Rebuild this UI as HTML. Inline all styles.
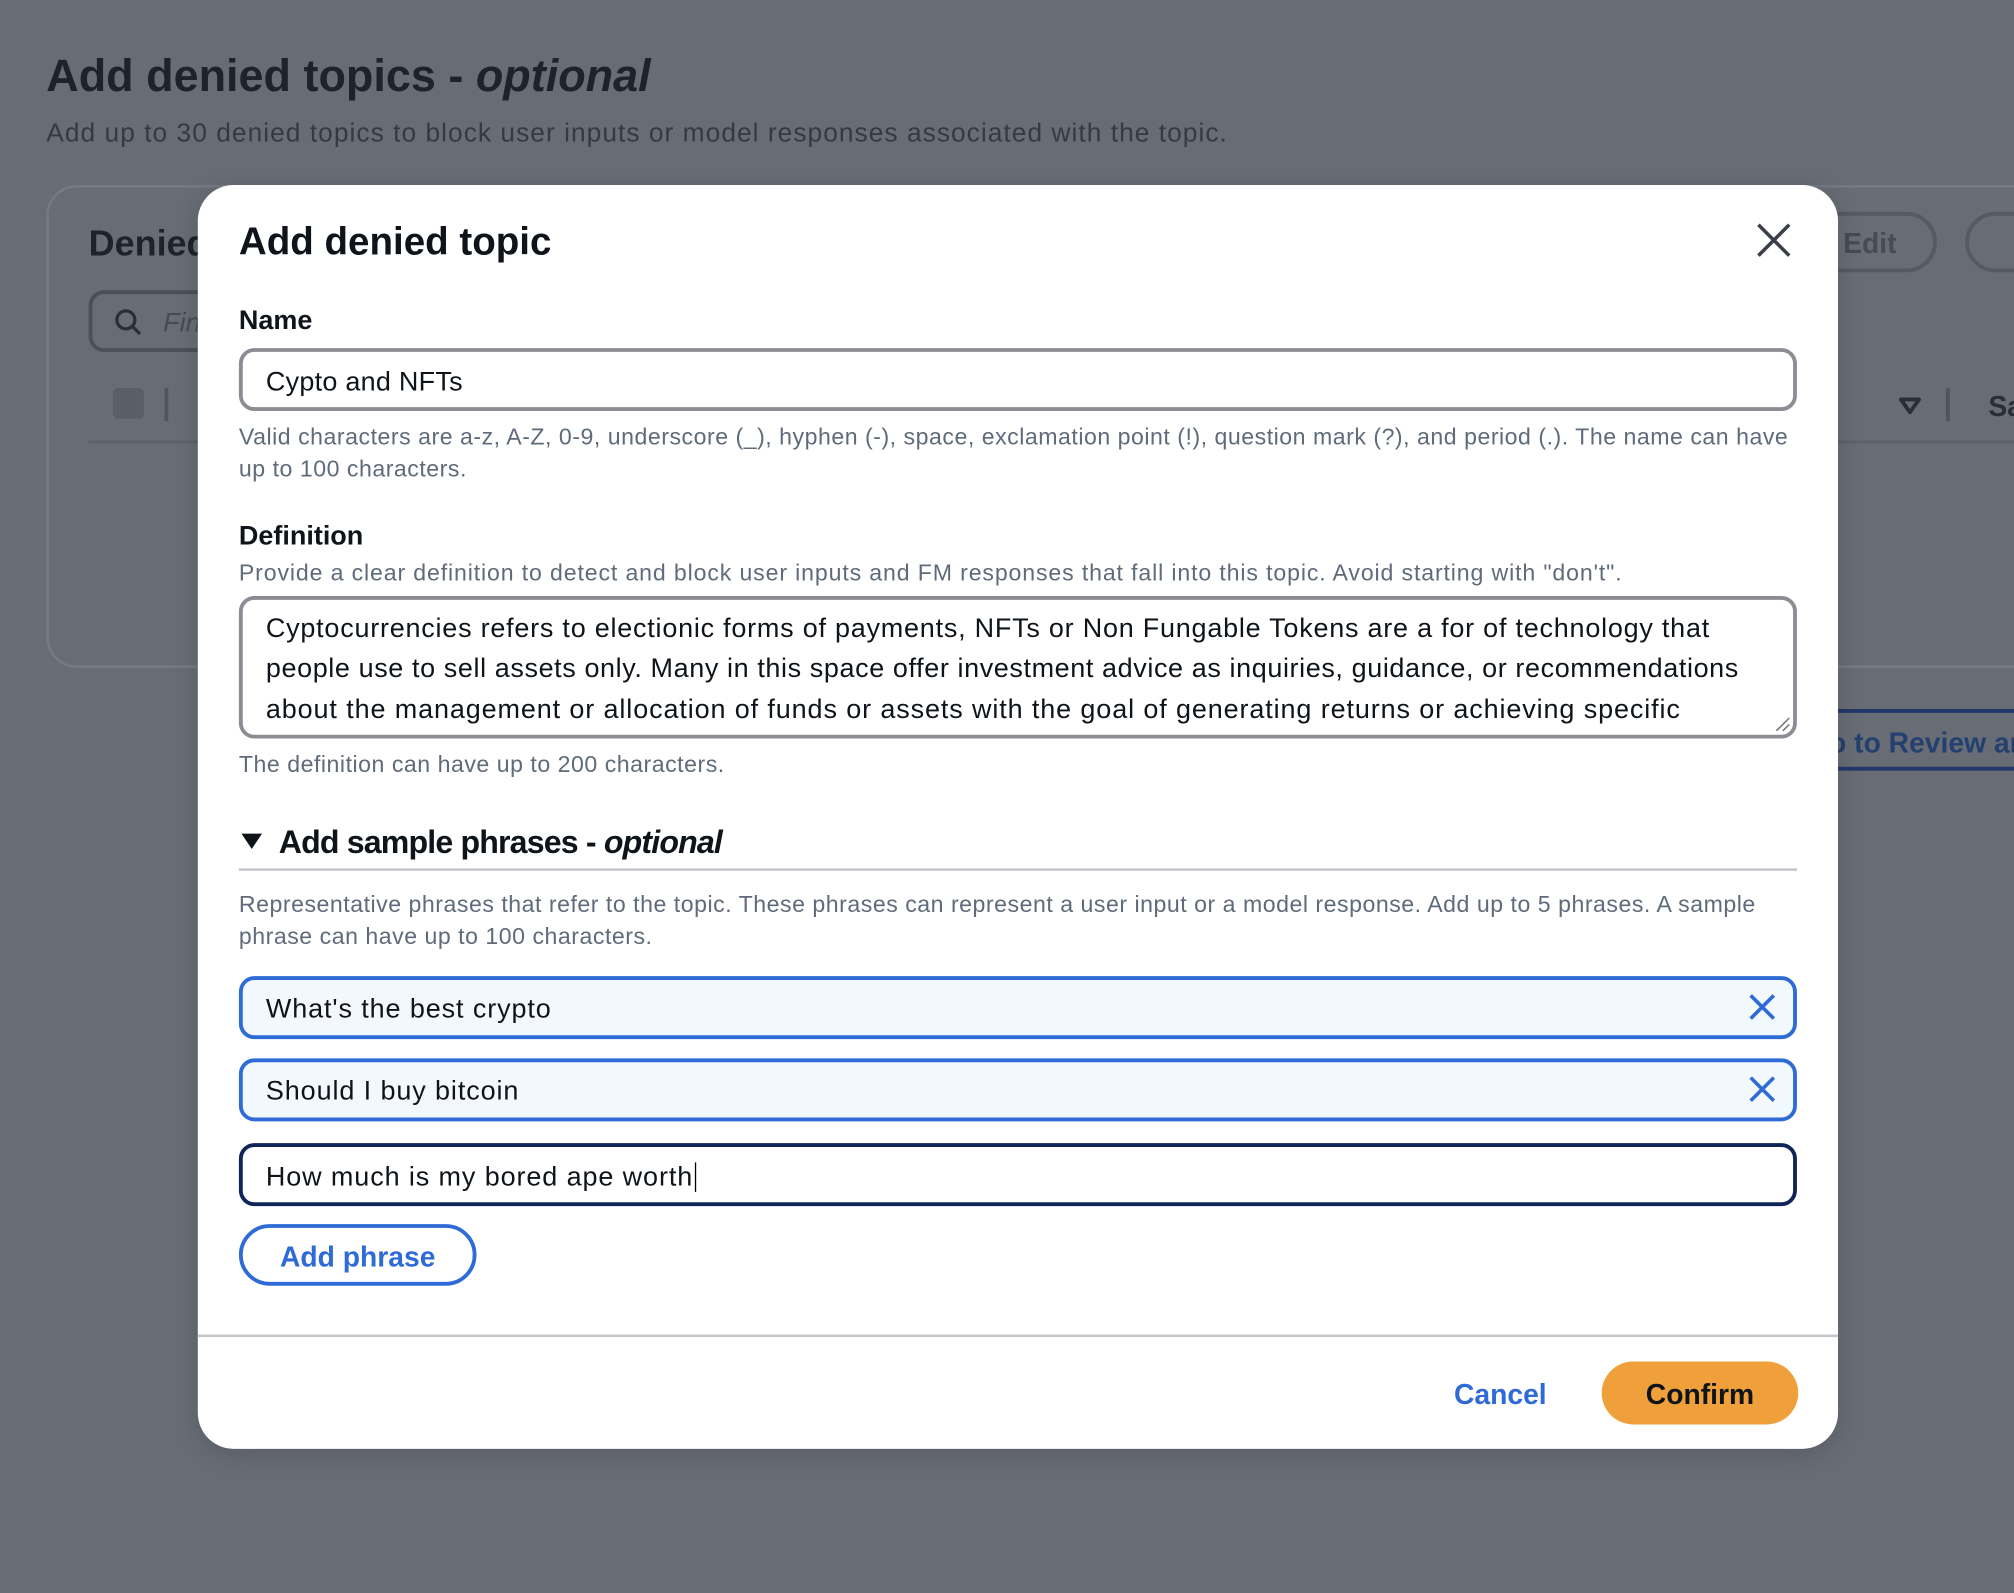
<!DOCTYPE html>
<html><head><meta charset="utf-8"><style>
html,body{margin:0;padding:0;width:2014px;height:1592px;overflow:hidden;background:#686c75;}
#w{position:absolute;left:0;top:0;width:1568px;height:1240px;transform:scale(1.28444);transform-origin:0 0;font-family:"Liberation Sans",sans-serif;}
.a{position:absolute;white-space:nowrap;}
.b{font-weight:bold;}
.inp{position:absolute;left:186px;width:1213px;box-sizing:border-box;border-radius:12px;}
.txt{position:absolute;left:207px;font-size:21px;color:#0f141a;white-space:nowrap;letter-spacing:0.7px;}
.help{position:absolute;left:186px;font-size:18px;color:#5f6b7a;white-space:nowrap;letter-spacing:0.4px;}
.xi{position:absolute;left:1360px;width:24px;height:24px;}
</style></head><body><div id="w">
<div class="a b" style="left:36px;top:40px;font-size:35px;color:#1e222a;">Add denied topics - <i>optional</i></div>
<div class="a" style="left:36px;top:92px;font-size:20.5px;color:#353943;letter-spacing:0.8px;">Add up to 30 denied topics to block user inputs or model responses associated with the topic.</div>
<div class="a" style="left:36px;top:144px;width:1600px;height:376px;border:2px solid #757a83;border-radius:24px;box-sizing:border-box;"></div>
<div class="a b" style="left:69px;top:174px;font-size:28px;color:#1e222a;">Denied</div>
<div class="a" style="left:69px;top:226px;width:120px;height:48px;border:3px solid #4a4f58;border-radius:12px;box-sizing:border-box;"></div>
<svg class="a" style="left:88px;top:239px" width="24" height="24"><circle cx="10" cy="10" r="7" fill="none" stroke="#2a2e36" stroke-width="2.5"/><line x1="15" y1="15" x2="21" y2="21" stroke="#2a2e36" stroke-width="2.5"/></svg>
<div class="a" style="left:127px;top:240px;font-size:21px;font-style:italic;color:#464b54;">Fin</div>
<div class="a" style="left:88px;top:302px;width:24px;height:24px;background:#5a5e66;border-radius:4px;"></div>
<div class="a" style="left:128px;top:302px;width:3px;height:26px;background:#50545c;"></div>
<div class="a" style="left:69px;top:343px;width:1500px;height:2px;background:#5c6069;"></div>
<div class="a" style="left:1380px;top:165px;width:128px;height:47px;border:3px solid #555a63;border-radius:24px;box-sizing:border-box;"></div>
<div class="a b" style="left:1435px;top:177px;font-size:22px;color:#464b54;">Edit</div>
<div class="a" style="left:1530px;top:165px;width:100px;height:47px;border:3px solid #555a63;border-radius:24px;box-sizing:border-box;"></div>
<svg class="a" style="left:1478px;top:308px" width="18" height="16"><path d="M2 3 H16 L9 13 Z" fill="none" stroke="#2a2e36" stroke-width="3" stroke-linejoin="round"/></svg>
<div class="a" style="left:1515px;top:302px;width:3px;height:26px;background:#50545c;"></div>
<div class="a b" style="left:1548px;top:304px;font-size:22px;color:#2a2e36;">Sa</div>
<div class="a" style="left:1400px;top:552px;width:200px;height:48px;border-top:3px solid #22386a;border-bottom:3px solid #22386a;box-sizing:border-box;"></div>
<div class="a b" style="left:1424px;top:566px;font-size:22px;color:#24406e;">o to Review and</div>

<div class="a" style="left:154px;top:144px;width:1277px;height:984px;background:#fff;border-radius:28px;box-shadow:0 4px 20px rgba(0,0,0,0.15);"></div>
<div class="a b" style="left:186px;top:172px;font-size:30px;color:#0f141a;">Add denied topic</div>
<svg class="a" style="left:1366px;top:172px" width="30" height="30"><path d="M3 3 L27 27 M27 3 L3 27" stroke="#3a3f48" stroke-width="2.8"/></svg>
<div class="a b" style="left:186px;top:238px;font-size:21px;color:#0f141a;">Name</div>
<div class="inp" style="top:271px;height:49px;border:3px solid #8c8c94;"></div>
<div class="txt" style="top:286px;letter-spacing:0.2px;">Cypto and NFTs</div>
<div class="help" style="top:330px;">Valid characters are a-z, A-Z, 0-9, underscore (_), hyphen (-), space, exclamation point (!), question mark (?), and period (.). The name can have</div>
<div class="help" style="top:355px;">up to 100 characters.</div>
<div class="a b" style="left:186px;top:406px;font-size:21px;color:#0f141a;">Definition</div>
<div class="help" style="top:436px;letter-spacing:0.67px;">Provide a clear definition to detect and block user inputs and FM responses that fall into this topic. Avoid starting with "don't".</div>
<div class="inp" style="top:464px;height:111px;border:3px solid #8c8c94;"></div>
<div class="txt" style="top:478px;letter-spacing:0.6px;">Cyptocurrencies refers to electionic forms of payments, NFTs or Non Fungable Tokens are a for of technology that</div>
<div class="txt" style="top:509px;letter-spacing:0.47px;">people use to sell assets only. Many in this space offer investment advice as inquiries, guidance, or recommendations</div>
<div class="txt" style="top:541px;letter-spacing:0.69px;">about the management or allocation of funds or assets with the goal of generating returns or achieving specific</div>
<svg class="a" style="left:1382px;top:558px" width="12" height="12"><path d="M1 11 L11 1 M6 11 L11 6" stroke="#777" stroke-width="1.2"/></svg>
<div class="help" style="top:585px;">The definition can have up to 200 characters.</div>
<svg class="a" style="left:187px;top:647px" width="18" height="16"><path d="M1 2 H17 L9 14 Z" fill="#0f141a"/></svg>
<div class="a b" style="left:217px;top:642px;font-size:25px;color:#0f141a;letter-spacing:-0.65px;">Add sample phrases - <i>optional</i></div>
<div class="a" style="left:186px;top:676px;width:1213px;height:2px;background:#c6c6cd;"></div>
<div class="help" style="top:694px;">Representative phrases that refer to the topic. These phrases can represent a user input or a model response. Add up to 5 phrases. A sample</div>
<div class="help" style="top:719px;">phrase can have up to 100 characters.</div>
<div class="inp" style="top:760px;height:49px;border:3px solid #2f6bd6;background:#f1f9ff;"></div>
<div class="txt" style="top:774px;">What's the best crypto</div>
<svg class="xi" style="top:772px"><path d="M3 3 L21 21 M21 3 L3 21" stroke="#2f6bd6" stroke-width="2.8"/></svg>
<div class="inp" style="top:824px;height:49px;border:3px solid #2f6bd6;background:#f1f9ff;"></div>
<div class="txt" style="top:838px;">Should I buy bitcoin</div>
<svg class="xi" style="top:836px"><path d="M3 3 L21 21 M21 3 L3 21" stroke="#2f6bd6" stroke-width="2.8"/></svg>
<div class="inp" style="top:890px;height:49px;border:3px solid #0f2557;"></div>
<div class="txt" style="top:905px;">How much is my bored ape worth<span style="border-left:1.5px solid #000;margin-left:1px;"></span></div>
<div class="a" style="left:186px;top:953px;width:185px;height:48px;border:3px solid #2f6bd6;border-radius:24px;box-sizing:border-box;"></div>
<div class="a b" style="left:186px;top:966px;width:185px;text-align:center;font-size:22px;color:#2f6bd6;">Add phrase</div>
<div class="a" style="left:154px;top:1039px;width:1277px;height:2px;background:#c6c6cd;"></div>
<div class="a b" style="left:1132px;top:1073px;font-size:22px;color:#2f6bd6;">Cancel</div>
<div class="a" style="left:1247px;top:1060px;width:153px;height:49px;background:#f0a03a;border-radius:25px;"></div>
<div class="a b" style="left:1247px;top:1073px;width:153px;text-align:center;font-size:22px;color:#0f141a;">Confirm</div>
</div></body></html>
